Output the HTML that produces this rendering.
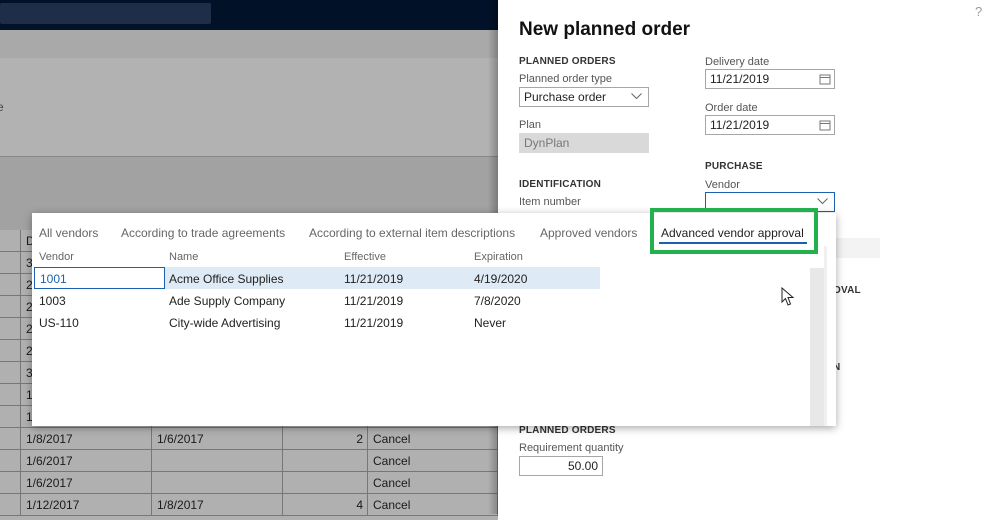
<!DOCTYPE html>
<html><head><meta charset="utf-8"><style>
*{margin:0;padding:0;box-sizing:border-box}
body{width:984px;height:514px;overflow:hidden;position:relative;font-family:"Segoe UI","Liberation Sans",sans-serif;background:#fff}
.a{position:absolute}
.t{font-size:12px;color:#222;white-space:nowrap}
.cell{position:absolute;height:22px;border-right:1px solid #777;border-bottom:1px solid #777;font-size:12px;color:#1a1a1a;line-height:23px;padding-left:5px;overflow:hidden;white-space:nowrap}
.lbl{position:absolute;font-size:11px;color:#555;white-space:nowrap}
.hd{position:absolute;font-size:10px;font-weight:bold;color:#333;letter-spacing:.2px;white-space:nowrap}
.inp{position:absolute;border:1px solid #a6a6a6;background:#fff;font-size:12px;color:#222;padding-left:4px;line-height:18px;height:20px}
.tab{position:absolute;top:226px;font-size:12px;color:#666;white-space:nowrap}
.col{position:absolute;font-size:11px;color:#666}
.chev{position:absolute;right:6px;top:5px}
</style></head><body>
<div class="a" style="left:0;top:0;width:498px;height:30px;background:#001128"></div>
<div class="a" style="left:0;top:3px;width:211px;height:21px;background:#1e2d48;border-radius:2px"></div>
<div class="a" style="left:0;top:30px;width:498px;height:28px;background:#a9a9a9"></div>
<div class="a" style="left:0;top:58px;width:498px;height:98px;background:#b2b2b2"></div>
<div class="a t" style="left:-3px;top:100px;color:#444">e</div>
<div class="a" style="left:0;top:156px;width:498px;height:1px;background:#888"></div>
<div class="a" style="left:0;top:157px;width:498px;height:73px;background:#a2a2a2"></div>
<div class="a" style="left:0;top:230px;width:498px;height:290px;background:#b0b0b0"></div>
<div id="grid"></div>
<div class="a" style="left:488px;top:0;width:10px;height:514px;background:linear-gradient(90deg,rgba(0,0,0,0),rgba(0,0,0,.25))"></div>
<div class="a" style="left:498px;top:0;width:486px;height:514px;background:#fff"></div>
<div class="a" style="left:975px;top:4px;font-size:13px;color:#999">?</div>
<div class="a" style="left:519px;top:19px;font-size:19px;font-weight:bold;color:#111">New planned order</div>
<div class="hd" style="left:519px;top:56px">PLANNED ORDERS</div>
<div class="lbl" style="left:519px;top:73px">Planned order type</div>
<div class="inp" style="left:519px;top:87px;width:130px">Purchase order<svg class="chev" width="11" height="7"><path d="M0.5 0.5 L5.5 5.5 L10.5 0.5" fill="none" stroke="#666"/></svg></div>
<div class="lbl" style="left:519px;top:119px">Plan</div>
<div class="inp" style="left:519px;top:133px;width:130px;background:#d9d9d9;border-color:#d9d9d9;color:#777">DynPlan</div>
<div class="hd" style="left:519px;top:179px">IDENTIFICATION</div>
<div class="lbl" style="left:519px;top:196px">Item number</div>
<div class="lbl" style="left:705px;top:56px">Delivery date</div>
<div class="inp" style="left:705px;top:69px;width:130px">11/21/2019</div>
<div class="lbl" style="left:705px;top:102px">Order date</div>
<div class="inp" style="left:705px;top:115px;width:130px">11/21/2019</div>
<svg class="a" style="left:819px;top:73px" width="12" height="12"><rect x="1" y="2" width="10" height="9" fill="none" stroke="#777"/><line x1="1" y1="4.5" x2="11" y2="4.5" stroke="#777"/></svg>
<svg class="a" style="left:819px;top:119px" width="12" height="12"><rect x="1" y="2" width="10" height="9" fill="none" stroke="#777"/><line x1="1" y1="4.5" x2="11" y2="4.5" stroke="#777"/></svg>
<div class="hd" style="left:705px;top:161px">PURCHASE</div>
<div class="lbl" style="left:705px;top:179px">Vendor</div>
<div class="inp" style="left:705px;top:192px;width:130px;border-color:#1a62b0"><svg class="chev" width="11" height="7"><path d="M0.5 0.5 L5.5 5.5 L10.5 0.5" fill="none" stroke="#666"/></svg></div>
<div class="a" style="left:836px;top:238px;width:44px;height:20px;background:#f3f3f3"></div>
<div class="hd" style="left:833px;top:285px">OVAL</div>
<div class="hd" style="left:833px;top:362px">N</div>
<div class="hd" style="left:519px;top:425px">PLANNED ORDERS</div>
<div class="lbl" style="left:519px;top:442px">Requirement quantity</div>
<div class="inp" style="left:519px;top:456px;width:84px;text-align:right;padding-right:4px">50.00</div>
<div class="a" style="left:32px;top:213px;width:804px;height:213px;background:#fff;box-shadow:0 2px 8px rgba(0,0,0,.35)"></div>
<div class="tab" style="left:39px">All vendors</div>
<div class="tab" style="left:121px">According to trade agreements</div>
<div class="tab" style="left:309px">According to external item descriptions</div>
<div class="tab" style="left:540px">Approved vendors</div>
<div class="tab" style="left:661px;color:#222">Advanced vendor approval</div>
<div class="a" style="left:659px;top:242px;width:148px;height:2px;background:#1a62b0"></div>
<div class="a" style="left:650px;top:208px;width:168px;height:46px;border:4px solid #22b14c"></div>
<div class="a" style="left:824px;top:246px;width:3px;height:180px;background:#f0f0f0"></div>
<div class="a" style="left:810px;top:268px;width:14px;height:158px;background:#e8e8e8"></div>
<div class="col" style="left:39px;top:251px">Vendor</div>
<div class="col" style="left:169px;top:251px">Name</div>
<div class="col" style="left:344px;top:251px">Effective</div>
<div class="col" style="left:474px;top:251px">Expiration</div>
<div class="a" style="left:34px;top:267px;width:566px;height:22px;background:#deeaf6"></div>
<div class="a" style="left:34px;top:267px;width:131px;height:22px;border:1px solid #1a62b0;background:#fff"></div>
<div class="a t" style="left:40px;top:272px;color:#1a62b0">1001</div>
<div class="a t" style="left:169px;top:272px">Acme Office Supplies</div>
<div class="a t" style="left:344px;top:272px">11/21/2019</div>
<div class="a t" style="left:474px;top:272px">4/19/2020</div>
<div class="a t" style="left:39px;top:294px">1003</div>
<div class="a t" style="left:169px;top:294px">Ade Supply Company</div>
<div class="a t" style="left:344px;top:294px">11/21/2019</div>
<div class="a t" style="left:474px;top:294px">7/8/2020</div>
<div class="a t" style="left:39px;top:316px">US-110</div>
<div class="a t" style="left:169px;top:316px">City-wide Advertising</div>
<div class="a t" style="left:344px;top:316px">11/21/2019</div>
<div class="a t" style="left:474px;top:316px">Never</div>
<svg class="a" style="left:781px;top:287px" width="14" height="20"><path d="M1 1 L1 15 L4.5 11.5 L7 18 L9.5 17 L7 10.5 L12 10.5 Z" fill="#fff" stroke="#222" stroke-width="1"/></svg>
<script>
var g=document.getElementById('grid'),h='';
var cols=[[0,21],[21,131],[152,131],[283,85],[368,130]];
var data={9:['1/8/2017','1/6/2017','2','Cancel'],10:['1/6/2017','','','Cancel'],11:['1/6/2017','','','Cancel'],12:['1/12/2017','1/8/2017','4','Cancel']};
var lc=['D','3','2','2','2','2','3','1','1'];
for(var r=0;r<13;r++){var y=230+r*22;for(var c=0;c<5;c++){var tx='';
if(c==1){tx=data[r]?data[r][0]:(lc[r]||'');}
else if(c>1&&data[r])tx=data[r][c-1];
var st=(c==3)?'text-align:right;padding-right:4px;':'';
h+='<div class="cell" style="left:'+cols[c][0]+'px;top:'+y+'px;width:'+cols[c][1]+'px;'+st+'">'+tx+'</div>';}}
g.innerHTML=h;
</script>
</body></html>
